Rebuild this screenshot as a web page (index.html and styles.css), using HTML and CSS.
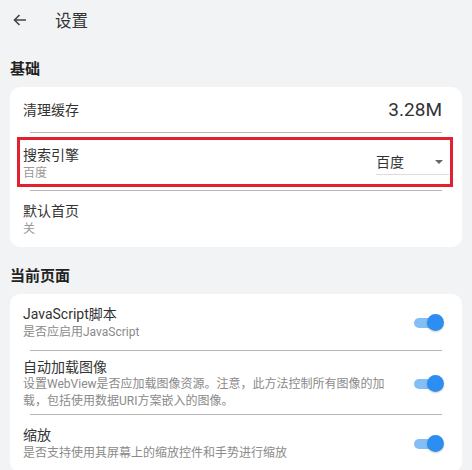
FILE: index.html
```html
<!DOCTYPE html>
<html lang="zh">
<head>
    <meta charset="UTF-8">
    <meta name="viewport" content="width=device-width, initial-scale=1.0">
    <title>设置</title>
    <link rel="stylesheet" href="styles.css">
</head>
<body>
    <div class="appbar">
        <svg class="back" width="16" height="16" viewBox="0 0 16 16">
            <path d="M14 8H2.5M7.5 3L2.5 8l5 5" fill="none" stroke="#444" stroke-width="1.6"/>
        </svg>
        <span class="title">设置</span>
    </div>

    <div class="section">基础</div>
    <div class="card">
        <div class="row single">
            <div class="name">清理缓存</div>
            <div class="size">3.28M</div>
        </div>
        <div class="divider"></div>
        <div class="row highlight">
            <div class="text">
                <div class="name">搜索引擎</div>
                <div class="value">百度</div>
            </div>
            <div class="select">
                <span>百度</span>
                <span class="caret"></span>
            </div>
        </div>
        <div class="divider"></div>
        <div class="row last">
            <div class="text">
                <div class="name">默认首页</div>
                <div class="value">关</div>
            </div>
        </div>
    </div>

    <div class="section">当前页面</div>
    <div class="card">
        <div class="row first">
            <div class="text">
                <div class="name">JavaScript脚本</div>
                <div class="desc">是否应启用JavaScript</div>
            </div>
            <div class="toggle"><span class="thumb"></span></div>
        </div>
        <div class="divider"></div>
        <div class="row tight">
            <div class="text">
                <div class="name">自动加载图像</div>
                <div class="desc">设置WebView是否应加载图像资源。注意，此方法控制所有图像的加载，包括使用数据URI方案嵌入的图像。</div>
            </div>
            <div class="toggle"><span class="thumb"></span></div>
        </div>
        <div class="divider"></div>
        <div class="row">
            <div class="text">
                <div class="name">缩放</div>
                <div class="desc">是否支持使用其屏幕上的缩放控件和手势进行缩放</div>
            </div>
            <div class="toggle"><span class="thumb"></span></div>
        </div>
    </div>
</body>
</html>
```

FILE: styles.css
```css
body {
    margin: 0;
    background: #f2f3f5;
    font-family: Roboto, "Noto Sans CJK SC", sans-serif;
    color: #333;
}
.appbar {
    height: 40px;
    display: flex;
    align-items: center;
    padding-left: 12px;
}
.back {
    display: block;
}
.title {
    margin-left: 27px;
    font-size: 16.5px;
    color: #333;
}
.section {
    margin: 19px 0 8px 10px;
    font-size: 15px;
    line-height: 20px;
    font-weight: bold;
    color: #222;
}
.card {
    margin: 0 10px;
    background: #fff;
    border-radius: 10px;
}
.divider {
    height: 1px;
    margin: 0 20px;
    background: #b5b5b5;
}
.row {
    display: flex;
    align-items: center;
    padding: 10px 18px 10px 13px;
}
.row.single {
    height: 45px;
    box-sizing: border-box;
    padding-top: 0;
    padding-bottom: 0;
}
.row.first {
    padding-bottom: 9px;
}
.row.tight {
    padding: 7px 18px 4px 13px;
}
.row.tight .name {
    line-height: 18px;
}
.row.last {
    padding-bottom: 10px;
}
.text {
    flex: 1;
    padding-right: 24px;
}
.name {
    flex: 1;
    font-size: 14px;
    line-height: 20px;
    color: #333;
}
.size {
    font-size: 19px;
    color: #333;
    margin-right: 2px;
}
.value {
    font-size: 12px;
    line-height: 16px;
    color: #999;
}
.desc {
    font-size: 12px;
    line-height: 17px;
    color: #8a8a8a;
}
.highlight {
    margin: 4px 9px 3px 7px;
    padding: 5px 0 3px 3px;
    border: 3px solid #e3202f;
}
.select {
    width: 73px;
    margin-right: 1px;
    display: flex;
    align-items: center;
    justify-content: space-between;
    font-size: 14px;
    line-height: 20px;
    padding-bottom: 2px;
    border-bottom: 1px solid #ddd;
    color: #333;
}
.caret {
    width: 0;
    height: 0;
    margin-right: 6px;
    border-left: 4px solid transparent;
    border-right: 4px solid transparent;
    border-top: 4px solid #666;
}
.toggle {
    position: relative;
    width: 26px;
    height: 10px;
    margin-right: 4px;
    border-radius: 5px;
    background: #83bef5;
}
.thumb {
    position: absolute;
    right: -4px;
    top: -4px;
    width: 17px;
    height: 17px;
    border-radius: 50%;
    background: #2b8ef0;
    box-shadow: 0 1px 2px rgba(0, 0, 0, 0.2);
}
```
